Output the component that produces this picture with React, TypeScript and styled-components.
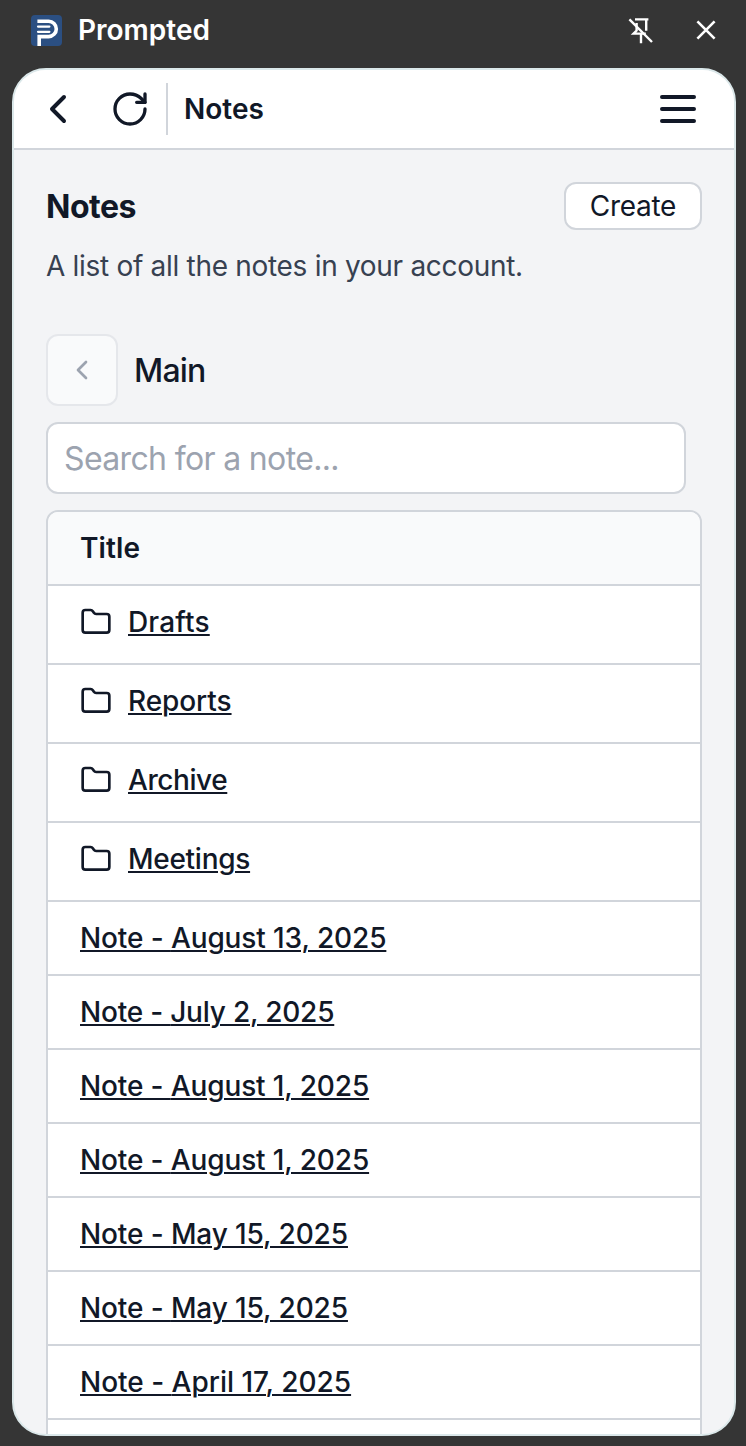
import React from "react";
import styled, { createGlobalStyle } from "styled-components";
import { Folder, RotateCw } from "lucide-react";

const GlobalStyle = createGlobalStyle`
  *, *::before, *::after { box-sizing: border-box; }
  html, body { margin: 0; background: #353535; }
  body { font-family: Inter, "Liberation Sans", sans-serif; color: #111827; }
  button, input { font: inherit; color: inherit; margin: 0; }
`;

const Window = styled.div`
  height: 1446px;
  display: flex;
  flex-direction: column;
  padding: 0 10px 10px 12px;
  background: #353535;
  overflow: hidden;
`;

const TitleBar = styled.div`
  height: 68px;
  flex: none;
  display: flex;
  align-items: center;
  padding: 0 18px 8px 19px;
  color: #fff;
`;

const AppName = styled.span`
  margin-left: 16px;
  flex: 1;
  font-size: 28px;
  line-height: 36px;
  font-weight: 560;
`;

const BarButton = styled.button<{ $gap?: number }>`
  display: flex;
  padding: 0;
  border: 0;
  background: none;
  margin-left: ${(p) => p.$gap ?? 0}px;
`;

const Panel = styled.div`
  flex: 1;
  min-height: 0;
  display: flex;
  flex-direction: column;
  border: 2px solid #dbe8ea;
  border-radius: 34px;
  background: #f3f4f6;
  overflow: hidden;
`;

const NavBar = styled.header`
  height: 80px;
  flex: none;
  display: flex;
  align-items: center;
  padding: 0 32px;
  background: #fff;
  border-bottom: 2px solid #d1d5db;
`;

const Divider = styled.span`
  width: 2px;
  height: 52px;
  margin: 0 16px 0 16px;
  background: #d1d5db;
`;

const NavTitle = styled.span`
  flex: 1;
  font-size: 28px;
  line-height: 40px;
  font-weight: 630;
`;

const Content = styled.main`
  padding: 32px 32px 0;
  display: flex;
  flex-direction: column;
`;

const HeadingRow = styled.div`
  display: flex;
  align-items: center;
  justify-content: space-between;
  height: 48px;
`;

const Heading = styled.h1`
  margin: 0;
  padding-top: 2px;
  font-size: 32px;
  line-height: 48px;
  font-weight: 650;
  letter-spacing: -0.5px;
`;

const CreateButton = styled.button`
  width: 138px;
  height: 48px;
  padding: 0;
  border: 2px solid #d1d5db;
  border-radius: 12px;
  background: #fff;
  font-size: 28px;
  line-height: 40px;
  letter-spacing: -0.3px;
`;

const Description = styled.p`
  margin: 16px 0 0;
  font-size: 28px;
  line-height: 40px;
  letter-spacing: -0.3px;
  color: #374151;
`;

const FolderRow = styled.div`
  display: flex;
  align-items: center;
  gap: 16px;
  margin-top: 48px;
`;

const UpButton = styled.button`
  width: 72px;
  height: 72px;
  display: flex;
  align-items: center;
  justify-content: center;
  padding: 0;
  border: 2px solid #e5e7eb;
  border-radius: 12px;
  background: #f9fafb;
`;

const FolderName = styled.span`
  padding-top: 2px;
  font-size: 32px;
  line-height: 48px;
  font-weight: 550;
  letter-spacing: -0.8px;
`;

const SearchInput = styled.input`
  width: 640px;
  height: 72px;
  margin-top: 16px;
  padding: 0 16px;
  border: 2px solid #d1d5db;
  border-radius: 12px;
  background: #fff;
  font-size: 32px;
  letter-spacing: -0.65px;
  outline: none;
  &::placeholder { color: #9ca3af; opacity: 1; }
`;

const Table = styled.div`
  margin-top: 16px;
  border: 2px solid #d1d5db;
  border-radius: 12px;
  background: #fff;
  overflow: hidden;
  flex: none;
`;

const TableHead = styled.div`
  height: 72px;
  padding: 16px 32px;
  background: #f9fafb;
  font-size: 28px;
  line-height: 40px;
  font-weight: 640;
  letter-spacing: 0.1px;
`;

const Row = styled.div<{ $folder?: boolean }>`
  height: ${(p) => (p.$folder ? 79 : 74)}px;
  display: flex;
  align-items: flex-start;
  gap: 16px;
  padding: 16px 32px;
  border-top: 2px solid #d1d5db;
`;

const RowLink = styled.a<{ $tracking: number }>`
  font-size: 28px;
  line-height: 40px;
  font-weight: 550;
  letter-spacing: ${(p) => p.$tracking}px;
  text-decoration: underline;
  text-decoration-thickness: 2px;
  text-underline-offset: 2px;
`;

const RowIcon = styled.span`
  display: flex;
  height: 40px;
  align-items: center;
`;

const folders = [
  { name: "Drafts", tracking: 0.16 },
  { name: "Reports", tracking: -0.08 },
  { name: "Archive", tracking: -0.42 },
  { name: "Meetings", tracking: -0.28 },
];

const notes = [
  { date: "August 13, 2025", tracking: -0.11 },
  { date: "July 2, 2025", tracking: -0.21 },
  { date: "August 1, 2025", tracking: -0.13 },
  { date: "August 1, 2025", tracking: -0.13 },
  { date: "May 15, 2025", tracking: -0.11 },
  { date: "May 15, 2025", tracking: -0.11 },
  { date: "April 17, 2025", tracking: -0.01 },
];

const Logo = () => (
  <svg width="31" height="31" viewBox="0 0 31 31" fill="none">
    <rect width="31" height="31" rx="4" fill="#2b4f82" />
    <path d="M6.4 6.2h11.2a7.7 7.7 0 0 1 0 15.4H8.2V31" stroke="#fff" strokeWidth="3.6" />
    <path d="M7 11.6h11.4M7 16.8h11.4" stroke="#fff" strokeWidth="2.2" strokeLinecap="round" />
  </svg>
);

const PinOff = () => (
  <svg width="26" height="28" viewBox="0 0 26 28" fill="none" stroke="#fff" strokeWidth="2.4">
    <path d="M7 3.4h13.4M18.2 3.4v11.4M8.6 7v7.6l-3 3h12.2M13 17.6v9.6" />
    <path d="M1.4 3.4l22.6 22.6" />
  </svg>
);

const App = () => (
  <Window>
    <GlobalStyle />
    <TitleBar>
      <Logo />
      <AppName>Prompted</AppName>
      <BarButton aria-label="Unpin">
        <PinOff />
      </BarButton>
      <BarButton $gap={40} aria-label="Close">
        <svg width="24" height="24" viewBox="0 0 24 24" fill="none" stroke="#fff" strokeWidth="2.6">
          <path d="M3.4 3.4l17.2 17.2M20.6 3.4L3.4 20.6" />
        </svg>
      </BarButton>
    </TitleBar>
    <Panel>
      <NavBar>
        <BarButton aria-label="Back">
          <svg width="24" height="32" viewBox="0 0 24 32" fill="none" stroke="currentColor" strokeWidth="4" strokeLinecap="round" strokeLinejoin="round">
            <path d="M18 4L6 16l12 12" />
          </svg>
        </BarButton>
        <BarButton $gap={40} aria-label="Refresh">
          <RotateCw size={40} strokeWidth={2} />
        </BarButton>
        <Divider />
        <NavTitle>Notes</NavTitle>
        <BarButton aria-label="Menu">
          <svg width="48" height="48" viewBox="0 0 48 48" stroke="currentColor" strokeWidth="4" strokeLinecap="round">
            <path d="M8 12h32M8 24h32M8 36h32" />
          </svg>
        </BarButton>
      </NavBar>
      <Content>
        <HeadingRow>
          <Heading>Notes</Heading>
          <CreateButton>Create</CreateButton>
        </HeadingRow>
        <Description>A list of all the notes in your account.</Description>
        <FolderRow>
          <UpButton aria-label="Up one folder">
            <svg width="24" height="24" viewBox="0 0 24 24" fill="none" stroke="#9ca3af" strokeWidth="2.7" strokeLinecap="round" strokeLinejoin="round">
              <path d="M16 4L8 12l8 8" />
            </svg>
          </UpButton>
          <FolderName>Main</FolderName>
        </FolderRow>
        <SearchInput placeholder="Search for a note..." />
        <Table>
          <TableHead>Title</TableHead>
          {folders.map(({ name, tracking }) => (
            <Row key={name} $folder>
              <RowIcon>
                <Folder size={32} strokeWidth={2} />
              </RowIcon>
              <RowLink $tracking={tracking}>{name}</RowLink>
            </Row>
          ))}
          {notes.map(({ date, tracking }, i) => (
            <Row key={i}>
              <RowLink $tracking={tracking}>Note - {date}</RowLink>
            </Row>
          ))}
          <Row />
        </Table>
      </Content>
    </Panel>
  </Window>
);

export default App;
